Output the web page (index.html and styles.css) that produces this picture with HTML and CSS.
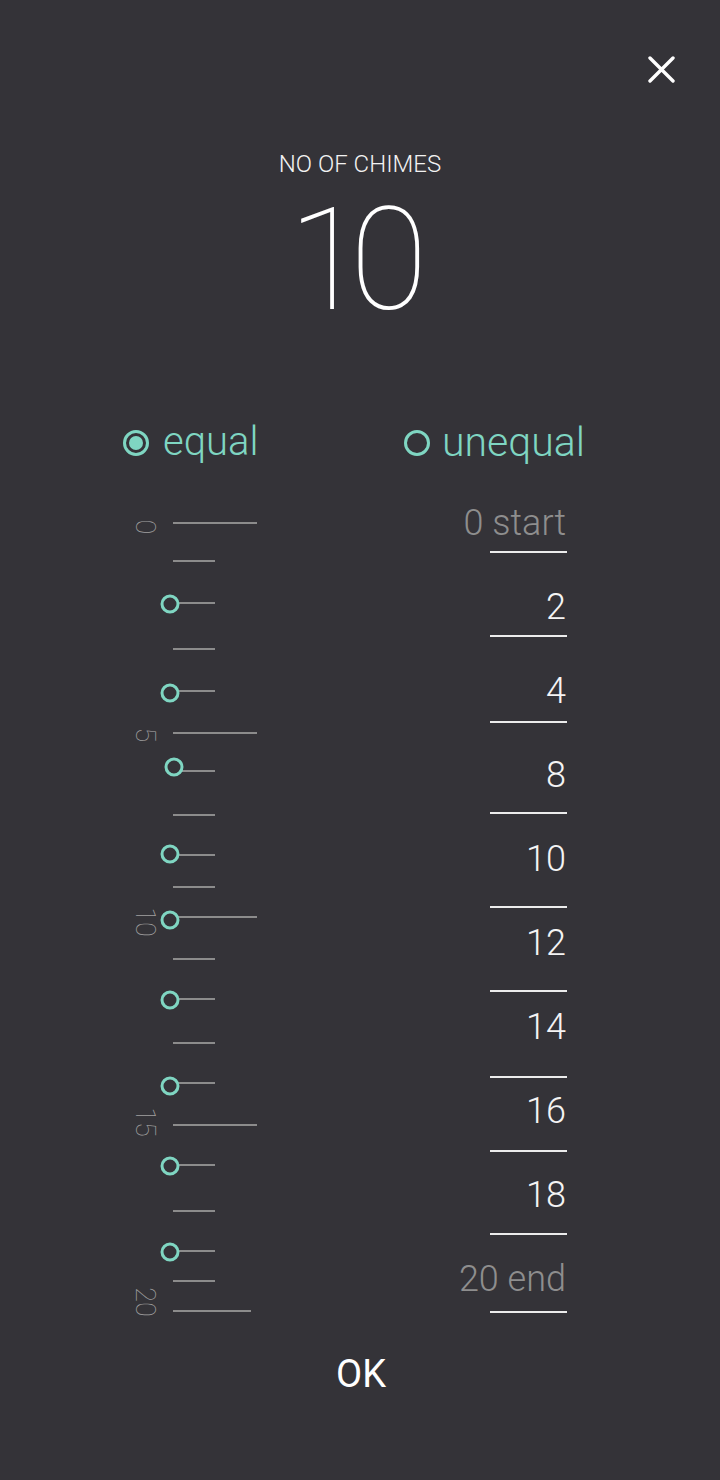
FILE: index.html
```html
<!DOCTYPE html>
<html lang="en">
<head>
<meta charset="utf-8">
<title>No of chimes</title>
<link rel="stylesheet" href="styles.css">
</head>
<body>
<div class="screen">
  <div class="topbar">
    <button class="close" aria-label="Close">
      <svg width="27" height="27" viewBox="0 0 27 27"><path d="M2 2 L25 25 M25 2 L2 25" stroke="#ffffff" stroke-width="3.4" stroke-linecap="round"/></svg>
    </button>
  </div>

  <div class="title">NO OF CHIMES</div>
  <div class="count">10</div>

  <div class="radios">
    <label class="radio selected"><span class="dot"></span><span class="rlabel">equal</span></label>
    <label class="radio"><span class="dot"></span><span class="rlabel">unequal</span></label>
  </div>

  <div class="main">
    <div class="ruler">
      <span class="tick long" style="top:41px"></span>
      <span class="tick" style="top:79px"></span>
      <span class="tick" style="top:121px"></span>
      <span class="tick" style="top:167px"></span>
      <span class="tick" style="top:209px"></span>
      <span class="tick long" style="top:251px"></span>
      <span class="tick" style="top:289px"></span>
      <span class="tick" style="top:333px"></span>
      <span class="tick" style="top:373px"></span>
      <span class="tick" style="top:405px"></span>
      <span class="tick long" style="top:435px"></span>
      <span class="tick" style="top:477px"></span>
      <span class="tick" style="top:517px"></span>
      <span class="tick" style="top:561px"></span>
      <span class="tick" style="top:601px"></span>
      <span class="tick long" style="top:643px"></span>
      <span class="tick" style="top:683px"></span>
      <span class="tick" style="top:729px"></span>
      <span class="tick" style="top:769px"></span>
      <span class="tick" style="top:799px"></span>
      <span class="tick long last" style="top:829px"></span>

      <span class="num" style="top:46px">0</span>
      <span class="num" style="top:254px">5</span>
      <span class="num" style="top:441px">10</span>
      <span class="num" style="top:641px">15</span>
      <span class="num" style="top:821px">20</span>

      <span class="knob" style="top:123px"></span>
      <span class="knob" style="top:212px"></span>
      <span class="knob shift" style="top:286px"></span>
      <span class="knob" style="top:373px"></span>
      <span class="knob" style="top:439px"></span>
      <span class="knob" style="top:519px"></span>
      <span class="knob" style="top:605px"></span>
      <span class="knob" style="top:685px"></span>
      <span class="knob" style="top:771px"></span>
    </div>

    <div class="list">
      <div class="item muted">0 start</div>
      <div class="item">2</div>
      <div class="item">4</div>
      <div class="item">8</div>
      <div class="item">10</div>
      <div class="item">12</div>
      <div class="item">14</div>
      <div class="item">16</div>
      <div class="item">18</div>
      <div class="item muted">20 end</div>

      <span class="rule" style="top:70px"></span>
      <span class="rule" style="top:154px"></span>
      <span class="rule" style="top:240px"></span>
      <span class="rule" style="top:331px"></span>
      <span class="rule" style="top:425px"></span>
      <span class="rule" style="top:509px"></span>
      <span class="rule" style="top:595px"></span>
      <span class="rule" style="top:669px"></span>
      <span class="rule" style="top:752px"></span>
      <span class="rule" style="top:830px"></span>
    </div>
  </div>

  <div class="actions">
    <button class="ok">OK</button>
  </div>
</div>
</body>
</html>
```

FILE: styles.css
```css
* { box-sizing: border-box; }

html, body {
  margin: 0;
  padding: 0;
  background: #343338;
}

.screen {
  width: 720px;
  height: 1480px;
  background: #343338;
  font-family: Roboto, "Liberation Sans", sans-serif;
  color: #ffffff;
  overflow: hidden;
}

.topbar {
  display: flex;
  justify-content: flex-end;
  padding: 56px 45px 0 0;
  height: 83px;
}

.close {
  width: 27px;
  height: 27px;
  padding: 0;
  border: 0;
  background: none;
  display: block;
}
.close svg { display: block; }

.title {
  margin-top: 67px;
  text-align: center;
  font-size: 24px;
  line-height: 28px;
  font-weight: 300;
  color: #f2f2f2;
}

.count {
  margin-top: 12px;
  text-align: center;
  font-size: 142px;
  line-height: 142px;
  font-weight: 100;
  letter-spacing: -16px;
  padding-right: 20px;
  color: #ffffff;
}

.radios {
  margin-top: 86px;
  display: flex;
  padding-left: 123px;
  height: 48px;
}

.radio {
  display: flex;
  align-items: center;
  color: #7fd6c2;
  font-size: 40px;
  line-height: 48px;
  font-weight: 300;
}
.radio:first-child { width: 281px; }
.radio:last-child .rlabel { font-size: 41px; }

.dot {
  width: 26px;
  height: 26px;
  border: 3px solid #7fd6c2;
  border-radius: 50%;
  margin-right: 12px;
  margin-top: 2px;
  position: relative;
}
.radio.selected .dot { margin-right: 14px; }
.radio.selected .dot::after {
  content: "";
  position: absolute;
  left: 3px;
  top: 3px;
  width: 14px;
  height: 14px;
  border-radius: 50%;
  background: #7fd6c2;
}

.main {
  margin-top: 15px;
  display: flex;
  justify-content: space-between;
  padding: 0 153px 0 120px;
  height: 840px;
}

.ruler {
  position: relative;
  width: 140px;
  height: 840px;
}

.tick {
  position: absolute;
  left: 53px;
  width: 42px;
  height: 2px;
  background: #8c8c8c;
}
.tick.long { width: 84px; }
.tick.long.last { width: 78px; }

.num {
  position: absolute;
  left: 24px;
  font-size: 27px;
  line-height: 27px;
  font-weight: 100;
  color: #a0a0a0;
  transform: translate(-50%, -50%) rotate(90deg);
  white-space: nowrap;
}

.knob {
  position: absolute;
  left: 50px;
  width: 19px;
  height: 19px;
  border: 3px solid #7fd6c2;
  border-radius: 50%;
  background: #343338;
  transform: translate(-50%, -50%);
}
.knob.shift { left: 54px; }

.list {
  position: relative;
  width: 127px;
  height: 840px;
}

.item {
  height: 84px;
  text-align: right;
  font-size: 36px;
  line-height: 84px;
  font-weight: 300;
  color: #f4f4f4;
  padding-right: 1px;
}
.item.muted { color: #8e8e8e; }

.rule {
  position: absolute;
  right: 0;
  width: 77px;
  height: 2px;
  background: #ececec;
}

.actions {
  margin-top: 29px;
  display: flex;
  justify-content: center;
}

.ok {
  border: 0;
  background: none;
  padding: 0;
  font-family: Roboto, "Liberation Sans", sans-serif;
  font-size: 38px;
  line-height: 48px;
  font-weight: 400;
  color: #ffffff;
  margin-left: 2px;
}
```
